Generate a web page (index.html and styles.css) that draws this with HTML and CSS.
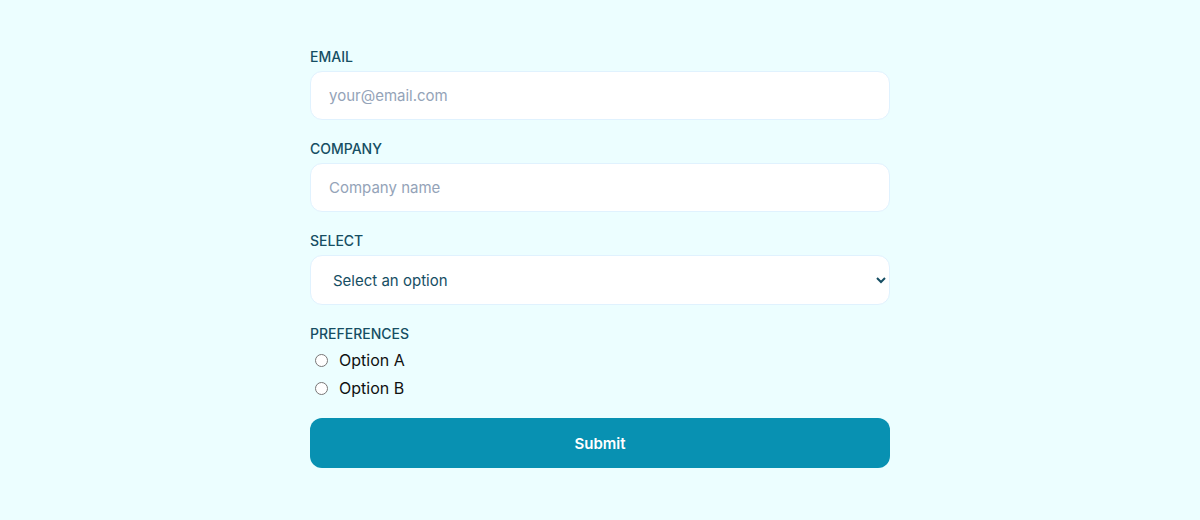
FILE: index.html
```html
<!DOCTYPE html>
<html lang="en">
	<head>
		<meta charset="utf-8">
		<title>Form</title>
		<link rel="stylesheet" href="styles.css">
	</head>
	<body>
		<main>
			<form class="form">
				<div class="field">
					<label for="email" class="field-label">EMAIL</label>
					<input type="email" id="email" class="field-input" placeholder="your@email.com">
				</div>
				<div class="field">
					<label for="company" class="field-label">COMPANY</label>
					<input type="text" id="company" class="field-input" placeholder="Company name">
				</div>
				<div class="field">
					<label for="choice" class="field-label">SELECT</label>
					<select id="choice" class="field-input field-select">
						<option value="">Select an option</option>
						<option value="a">Option A</option>
						<option value="b">Option B</option>
					</select>
				</div>
				<div class="field">
					<span class="field-label">PREFERENCES</span>
					<div class="radios">
						<label class="radio"><input type="radio" name="pref" value="a"> Option A</label>
						<label class="radio"><input type="radio" name="pref" value="b"> Option B</label>
					</div>
				</div>
				<button type="submit" class="submit">Submit</button>
			</form>
		</main>
	</body>
</html>
```

FILE: styles.css
```css
body {
	margin: 0px;
	padding: 0px;
	width: 100vw;
	height: 100vh;
	background-color: #ecfeff;
	font-family: Inter, "Liberation Sans", sans-serif;
	overflow: hidden;
}

main {
	display: flex;
	justify-content: center;
	padding-top: 46px;
}

.form {
	width: 580px;
	display: flex;
	flex-flow: column;
	gap: 18px;
}

.field {
	display: flex;
	flex-flow: column;
	gap: 4px;
}

.field-label {
	font-size: 14px;
	line-height: 21px;
	font-weight: 500;
	color: #164e63;
}

.field-input {
	box-sizing: border-box;
	width: 100%;
	height: 49px;
	padding: 0px 18px;
	border: 1px solid #e0f2fe;
	border-radius: 12px;
	background-color: #ffffff;
	font-family: inherit;
	font-size: 15px;
	color: #164e63;
	outline: none;
}

.field-input::placeholder {
	color: #94a3b8;
}

.field-select {
	height: 50px;
	padding-right: 8px;
}

.radios {
	display: flex;
	flex-flow: column;
	gap: 4px;
}

.radio {
	display: flex;
	align-items: center;
	gap: 11px;
	font-size: 16px;
	line-height: 24px;
	color: #111111;
}

.radio input {
	margin: 0px 0px 0px 5px;
}

.submit {
	height: 50px;
	border: none;
	border-radius: 12px;
	background-color: #0891b2;
	color: #ffffff;
	font-family: inherit;
	font-size: 15px;
	font-weight: 600;
}
```
